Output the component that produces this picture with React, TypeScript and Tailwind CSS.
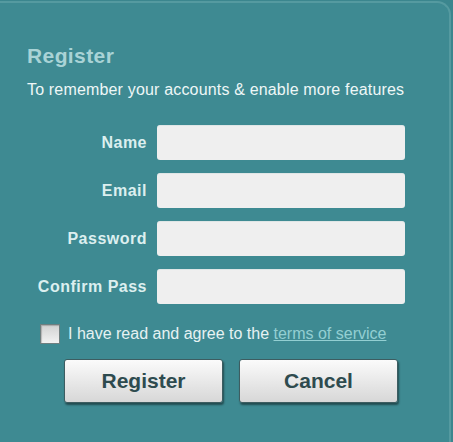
import React from "react";

const font = { fontFamily: '"Liberation Sans", Arial, sans-serif' };

function Row({ label, type = "text" }: { label: string; type?: string }) {
  return (
    <div className="flex items-center h-[35px]">
      <label className="w-[147px] text-right text-[16px] font-bold leading-[18px] tracking-[0.5px] text-[#dcefef]">
        {label}
      </label>
      <input
        type={type}
        className="ml-[10px] w-[248px] h-[35px] rounded-[3px] bg-[#efefef] border-t border-[#dfe6e6] outline-none"
      />
    </div>
  );
}

export default function App() {
  return (
    <div className="w-[453px] h-[442px] bg-[#3b868e] overflow-hidden" style={font}>
      <div className="w-[451px] h-[442px] mt-[1px] border-t-2 border-r-2 border-[#559aa0] rounded-tr-[14px] bg-[#3e8a92] pt-[41px]">
        <h1 className="pl-[27px] text-[21px] leading-[24px] font-bold tracking-[0.4px] text-[#a9d3d6]">
          Register
        </h1>
        <p className="pl-[27px] mt-[13px] text-[16px] leading-[18px] tracking-[0.17px] text-[#eef7f7]">
          To remember your accounts &amp; enable more features
        </p>
        <div className="mt-[26px] flex flex-col gap-[13px]">
          <Row label="Name" />
          <Row label="Email" />
          <Row label="Password" type="password" />
          <Row label="Confirm Pass" type="password" />
        </div>
        <div className="mt-[20px] pl-[40px] flex items-center h-[20px]">
          <span className="w-[20px] h-[20px] border border-[#6f7f80] bg-gradient-to-b from-[#d2d2d2] to-[#f2f2f2] shadow-[inset_1px_1px_1px_rgba(0,0,0,0.2)]" />
          <span className="ml-[8px] text-[16px] leading-[18px] text-[#e6f2f2]">
            I have read and agree to the{" "}
            <a href="#" className="text-[#93cfd2] underline">
              terms of service
            </a>
          </span>
        </div>
        <div className="mt-[15px] pl-[64px] flex gap-[16px]">
          <button className="w-[159px] h-[44px] rounded-[3px] border border-[#3d5d61] bg-gradient-to-b from-[#fbfbfb] to-[#d7d7d7] shadow-[1px_2px_2px_rgba(0,0,0,0.45)] text-[21px] font-bold text-[#2e4b4f]">
            Register
          </button>
          <button className="w-[159px] h-[44px] rounded-[3px] border border-[#3d5d61] bg-gradient-to-b from-[#fbfbfb] to-[#d7d7d7] shadow-[1px_2px_2px_rgba(0,0,0,0.45)] text-[21px] font-bold text-[#2e4b4f]">
            Cancel
          </button>
        </div>
      </div>
    </div>
  );
}
